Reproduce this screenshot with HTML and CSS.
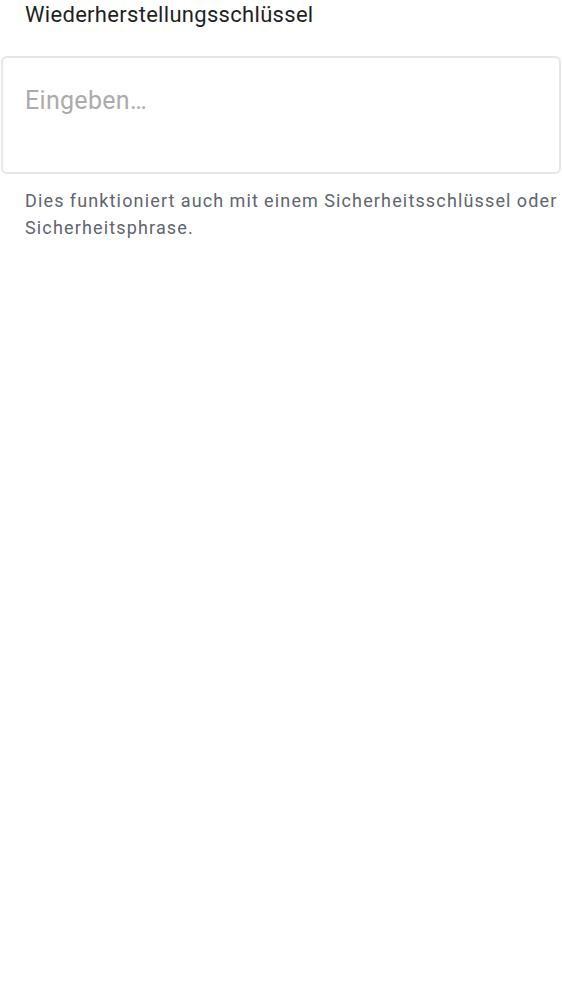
FILE: index.html
```html
<!DOCTYPE html>
<html lang="de">
<head>
<meta charset="utf-8">
<link rel="stylesheet" href="styles.css">
</head>
<body>
<div class="field">
  <label class="label" for="key">Wiederherstellungsschlüssel</label>
  <textarea class="input" id="key" placeholder="Eingeben…"></textarea>
  <p class="help">Dies funktioniert auch mit einem Sicherheitsschlüssel oder Sicherheitsphrase.</p>
</div>
</body>
</html>
```

FILE: styles.css
```css
html, body {
  margin: 0;
  padding: 0;
  background: #ffffff;
  overflow-x: hidden;
}
body {
  font-family: Roboto, "Noto Sans", sans-serif;
}
.field {
  display: flex;
  flex-direction: column;
  padding: 0 1px;
}
.label {
  font-size: 22px;
  line-height: 30px;
  letter-spacing: 0.3px;
  color: #1f1f23;
  padding: 0 24px;
  margin: 0 0 26px;
}
.input {
  box-sizing: border-box;
  height: 118px;
  width: 100%;
  border: 2px solid #e6e6e6;
  border-radius: 6px;
  padding: 28px 22px;
  font-family: Roboto, sans-serif;
  font-size: 25px;
  line-height: 30px;
  letter-spacing: 0.3px;
  resize: none;
  outline: none;
  color: #222;
}
.input::placeholder {
  color: #ababab;
}
.help {
  margin: 14px -12px 0 0;
  padding: 0 0 0 24px;
  font-size: 18px;
  line-height: 26.5px;
  letter-spacing: 1.15px;
  word-spacing: -0.5px;
  color: #60656e;
}
```
